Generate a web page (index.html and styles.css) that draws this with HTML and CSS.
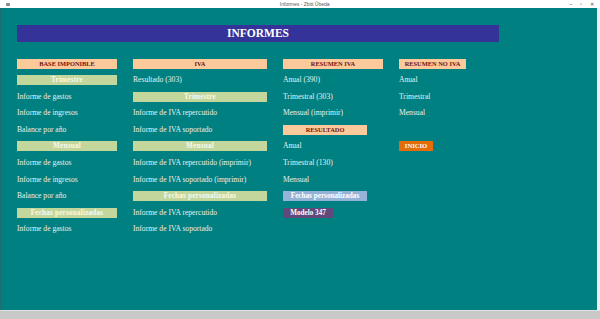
FILE: index.html
```html
<!DOCTYPE html>
<html lang="es">
<head>
    <meta charset="UTF-8">
    <meta name="viewport" content="width=device-width, initial-scale=1.0">
    <title>Informes - Zbitt Úbeda</title>
    <link rel="stylesheet" href="styles.css">
</head>
<body>
    <div class="titlebar">
        <span class="app-icon"></span>
        <span class="title">Informes - Zbitt Úbeda</span>
        <span class="controls">
            <span>–</span>
            <span>▫</span>
            <span>✕</span>
        </span>
    </div>

    <div class="sheet">
        <div class="banner">INFORMES</div>

        <div class="columns">
            <div class="col col-1">
                <div class="bar head">BASE IMPONIBLE</div>
                <div class="bar green">Trimestre</div>
                <div class="link">Informe de gastos</div>
                <div class="link">Informe de ingresos</div>
                <div class="link">Balance por año</div>
                <div class="bar green">Mensual</div>
                <div class="link">Informe de gastos</div>
                <div class="link">Informe de ingresos</div>
                <div class="link">Balance por año</div>
                <div class="bar green">Fechas personalizadas</div>
                <div class="link">Informe de gastos</div>
            </div>

            <div class="col col-2">
                <div class="bar head">IVA</div>
                <div class="link">Resultado (303)</div>
                <div class="bar green">Trimestre</div>
                <div class="link">Informe de IVA repercutido</div>
                <div class="link">Informe de IVA soportado</div>
                <div class="bar green">Mensual</div>
                <div class="link">Informe de IVA repercutido (imprimir)</div>
                <div class="link">Informe de IVA soportado (imprimir)</div>
                <div class="bar green">Fechas personalizadas</div>
                <div class="link">Informe de IVA repercutido</div>
                <div class="link">Informe de IVA soportado</div>
            </div>

            <div class="col col-3">
                <div class="bar head">RESUMEN IVA</div>
                <div class="link">Anual (390)</div>
                <div class="link">Trimestral (303)</div>
                <div class="link">Mensual (imprimir)</div>
                <div class="bar head short">RESULTADO</div>
                <div class="link">Anual</div>
                <div class="link">Trimestral (130)</div>
                <div class="link">Mensual</div>
                <div class="bar blue short">Fechas personalizadas</div>
                <div class="bar purple tiny">Modelo 347</div>
            </div>

            <div class="col col-4">
                <div class="bar head">RESUMEN NO IVA</div>
                <div class="link">Anual</div>
                <div class="link">Trimestral</div>
                <div class="link">Mensual</div>
                <div class="spacer"></div>
                <div class="bar orange">INICIO</div>
            </div>
        </div>
    </div>

    <div class="statusbar"></div>
</body>
</html>
```

FILE: styles.css
```css
html, body {
    margin: 0;
    padding: 0;
}

body {
    width: 600px;
    height: 319px;
    overflow: hidden;
    font-family: "Liberation Serif", "DejaVu Serif", serif;
    background-color: #ffffff;
}

.titlebar {
    height: 8px;
    display: flex;
    align-items: center;
    justify-content: space-between;
    padding: 0 6px;
    background-color: #ffffff;
    font-family: "Liberation Sans", sans-serif;
    font-size: 5px;
    color: #555;
}

.app-icon {
    width: 4px;
    height: 3px;
    background-color: #888;
    border-radius: 1px;
}

.title {
    margin-left: 30px;
}

.controls {
    display: flex;
    gap: 8px;
    color: #444;
}

.sheet {
    height: 302px;
    box-sizing: border-box;
    background-color: #008080;
    border-left: 1px solid #1f6e6e;
    border-right: 3px solid #e9f1f1;
    padding: 17px 0 0 16px;
}

.banner {
    width: 482px;
    height: 17px;
    background-color: #333399;
    color: #ffffff;
    font-weight: bold;
    font-size: 11.5px;
    line-height: 17px;
    text-align: center;
}

.columns {
    display: grid;
    grid-template-columns: 100px 134px 100px 67px;
    column-gap: 16px;
    margin-top: 16.5px;
}

.col {
    display: flex;
    flex-direction: column;
    align-items: flex-start;
    gap: 6.6px;
}

.bar,
.link,
.spacer {
    height: 10px;
    line-height: 10px;
    white-space: nowrap;
}

.bar {
    align-self: stretch;
    text-align: center;
    font-weight: bold;
    font-size: 7.2px;
}

.link {
    color: #e8f0ee;
    font-size: 7.6px;
}

.head {
    background-color: #fcc99b;
    color: #6e1414;
    font-size: 6.4px;
}

.green {
    background-color: #c3d69b;
    color: #f7f9ee;
    letter-spacing: 0.2px;
}

.blue {
    background-color: #95b3d7;
    color: #ffffff;
}

.purple {
    background-color: #604a7b;
    color: #ffffff;
}

.orange {
    background-color: #e46c0a;
    color: #ffffff;
    align-self: flex-start;
    width: 34px;
    font-size: 6.6px;
}

.short {
    align-self: flex-start;
    width: 84px;
}

.tiny {
    align-self: flex-start;
    width: 50px;
}

.statusbar {
    height: 9px;
    background-color: #c9c9c9;
    border-top: 1px solid #e0e0e0;
    box-sizing: border-box;
}
```
